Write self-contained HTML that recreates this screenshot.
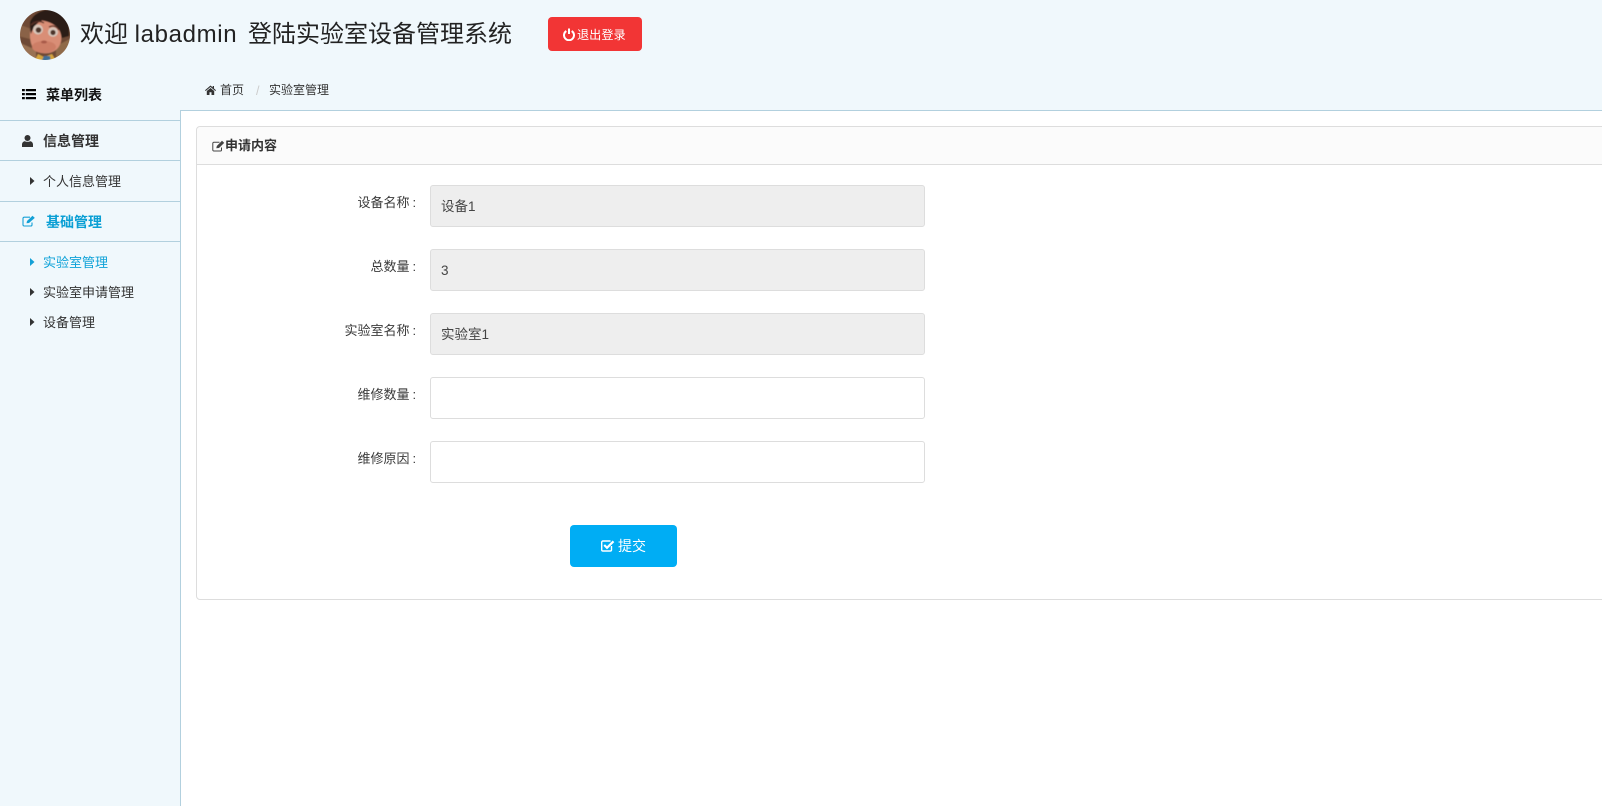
<!DOCTYPE html>
<html lang="zh-CN">
<head>
<meta charset="utf-8">
<title>实验室设备管理系统</title>
<style>
html,body{margin:0;padding:0;width:1602px;height:806px;overflow:hidden;background:#fff;}
body{position:relative;font-family:"Liberation Sans","Noto Sans CJK SC",sans-serif;color:#333;font-size:13px;}
.a{position:absolute;white-space:nowrap;}
.ln{position:absolute;background:#b2d0de;height:1px;}
.lb{position:absolute;width:122.5px;left:296px;text-align:right;font-size:13px;line-height:18px;color:#3a3a3a;white-space:nowrap;}
.lb i{font-style:normal;display:inline-block;width:9px;text-align:left;padding-left:3px;box-sizing:border-box;}
.in{position:absolute;left:430px;width:493px;height:40px;border:1px solid #ddd;border-radius:3px;background:#fff;}
.in.d{background:#eee;}
.in span{position:absolute;left:10px;top:11px;font-size:13.5px;line-height:20px;color:#444;white-space:nowrap;}
svg{position:absolute;display:block;}
</style>
</head>
<body>
<div class="a" style="left:0;top:0;width:1602px;height:110px;background:#f0f8fc;"></div>
<div class="a" style="left:0;top:110px;width:180px;height:696px;background:#f0f8fc;"></div>
<div class="a" style="left:180px;top:110px;width:1px;height:696px;background:#b2d0de;"></div>
<div class="a" style="left:180px;top:110px;width:1422px;height:1px;background:#b2d0de;"></div>

<!-- avatar -->
<svg style="left:20px;top:10px" width="50" height="50" viewBox="0 0 50 50">
<defs>
<clipPath id="c"><circle cx="25" cy="25" r="25"/></clipPath>
<filter id="b" x="-10%" y="-10%" width="120%" height="120%"><feGaussianBlur stdDeviation="0.6"/></filter>
</defs>
<g clip-path="url(#c)"><g filter="url(#b)">
<rect x="-2" y="-2" width="54" height="54" fill="#6e4a34"/>
<path d="M-2 14L14 20L14 30L-2 26Z" fill="#8a6246"/>
<path d="M-2 32L16 40L16 52L-2 52Z" fill="#9a7252"/>
<path d="M36 36L52 28L52 52L36 52Z" fill="#8f6a4a"/>
<path d="M10 12C14 2 26 -2 36 0C46 4 50 14 49 26L42 28C40 20 34 14 26 12C20 11 14 14 10 22Z" fill="#2a1a18"/>
<path d="M13 12C20 8 32 12 38 18C43 25 42 34 37 39C31 45 18 45 13 38C9 31 9 19 13 12Z" fill="#d98e76"/>
<path d="M13 12C16 10 20 9 24 10C19 11 14 15 11 24C10 19 11 15 13 12Z" fill="#2a1a18"/>
<ellipse cx="24" cy="37" rx="12" ry="6" fill="#cd7e66"/>
<ellipse cx="18" cy="19.500" rx="5" ry="5" fill="#d8c6ba"/>
<ellipse cx="33" cy="22" rx="5" ry="4.800" fill="#d8c6ba"/>
<circle cx="18.500" cy="20" r="2.800" fill="#4e3429"/>
<circle cx="33" cy="22.500" r="2.600" fill="#4e3429"/>
<path d="M11 15Q18 9 24 13M29 17Q35 14 39 20" stroke="#5a3226" stroke-width="1.300" fill="none"/>
<ellipse cx="24" cy="32" rx="3" ry="1.500" fill="#a85a48"/>
<path d="M14 52L18 44L24 47L32 44L37 52Z" fill="#d5a53e"/>
<path d="M21 52L24 46L30 46L31 52Z" fill="#3f7097"/>
</g></g>
</svg>

<div class="a" style="left:80px;top:16px;font-size:24px;line-height:38px;color:#222;">欢迎 <span style="letter-spacing:.65px;margin-right:4px">labadmin</span> 登陆实验室设备管理系统</div>

<!-- logout -->
<div class="a" style="left:548px;top:17px;width:94px;height:34px;background:#f23535;border-radius:4px;"></div>
<svg style="left:563px;top:28px" width="12" height="13" viewBox="0 0 12 13"><path d="M3.300 3A5 5 0 1 0 8.700 3" fill="none" stroke="#fff" stroke-width="2"/><path d="M6 .5V6" stroke="#fff" stroke-width="2"/></svg>
<div class="a" style="left:577px;top:26px;font-size:12.2px;line-height:18px;color:#fff;">退出登录</div>

<!-- menu header -->
<svg style="left:22px;top:89px" width="14" height="11" viewBox="0 0 14 11" fill="#000"><path d="M0 0h2.800v2.300H0zM3.800 0H14v2.300H3.800zM0 4h2.800v2.300H0zM3.800 4H14v2.300H3.800zM0 8h2.800v2.300H0zM3.800 8H14v2.300H3.800z"/></svg>
<div class="a" style="left:46px;top:85px;font-size:14px;line-height:20px;font-weight:700;color:#111;">菜单列表</div>
<div class="ln" style="left:0;top:120px;width:180px;"></div>

<!-- 信息管理 -->
<svg style="left:22px;top:135px" width="11" height="12" viewBox="0 0 11 12" fill="#333"><circle cx="5.500" cy="3" r="3"/><path d="M0 12V9.500C0 7.500 1.500 6.200 3 6.200C4 7 7 7 8 6.200C9.500 6.200 11 7.500 11 9.500V12Z"/></svg>
<div class="a" style="left:43px;top:131px;font-size:14px;line-height:20px;font-weight:700;color:#333;">信息管理</div>
<div class="ln" style="left:0;top:160px;width:180px;"></div>

<svg style="left:30px;top:177px" width="5" height="8" viewBox="0 0 5 8" fill="#333"><path d="M0 0L4.500 4L0 8Z"/></svg>
<div class="a" style="left:43px;top:172px;font-size:13px;line-height:20px;color:#333;">个人信息管理</div>
<div class="ln" style="left:0;top:201px;width:180px;"></div>

<!-- 基础管理 -->
<svg style="left:22px;top:215px" width="14" height="12" viewBox="0 0 14 12"><path d="M10 7.500V10A1.200 1.200 0 0 1 8.800 11H2A1.200 1.200 0 0 1 1 10V3.300A1.200 1.200 0 0 1 2 2.200H8" fill="none" stroke="#13a0d6" stroke-width="1.100"/><path d="M4.500 8.300L5 6L10.500 .7L12.800 2.900L7 8Z" fill="#13a0d6"/></svg>
<div class="a" style="left:46px;top:212px;font-size:14px;line-height:20px;font-weight:700;color:#0a9fd4;">基础管理</div>
<div class="ln" style="left:0;top:241px;width:180px;"></div>

<svg style="left:30px;top:258px" width="5" height="8" viewBox="0 0 5 8" fill="#13a0d6"><path d="M0 0L4.500 4L0 8Z"/></svg>
<div class="a" style="left:43px;top:253px;font-size:13px;line-height:20px;color:#0fa2d8;">实验室管理</div>
<svg style="left:30px;top:288px" width="5" height="8" viewBox="0 0 5 8" fill="#333"><path d="M0 0L4.500 4L0 8Z"/></svg>
<div class="a" style="left:43px;top:283px;font-size:13px;line-height:20px;color:#333;">实验室申请管理</div>
<svg style="left:30px;top:318px" width="5" height="8" viewBox="0 0 5 8" fill="#333"><path d="M0 0L4.500 4L0 8Z"/></svg>
<div class="a" style="left:43px;top:313px;font-size:13px;line-height:20px;color:#333;">设备管理</div>

<!-- breadcrumb -->
<svg style="left:205px;top:85px" width="11" height="10" viewBox="0 0 11 10" fill="#333"><path d="M5.500 .5L0 5.200L.7 6L5.500 2L10.300 6L11 5.200L9 3.500V1H7.700V2.400Z"/><path d="M1.800 6L5.500 3L9.200 6V10H6.500V7.200H4.500V10H1.800Z"/></svg>
<div class="a" style="left:220px;top:80px;font-size:12px;line-height:20px;color:#333;">首页</div>
<div class="a" style="left:256px;top:81px;font-size:12.500px;line-height:20px;color:#ccc;">/</div>
<div class="a" style="left:269px;top:80px;font-size:12px;line-height:20px;color:#333;">实验室管理</div>

<!-- panel -->
<div class="a" style="left:196px;top:126px;width:1420px;height:472px;border:1px solid #ddd;border-radius:4px;box-sizing:content-box;"></div>
<div class="a" style="left:197px;top:127px;width:1405px;height:37px;background:#fbfbfb;border-bottom:1px solid #ddd;border-top-left-radius:4px;"></div>
<svg style="left:212px;top:140px" width="13" height="12" viewBox="0 0 13 12"><path d="M9.500 7.500V10A1 1 0 0 1 8.500 11H1.800A1 1 0 0 1 .8 10V3.300A1 1 0 0 1 1.800 2.300H7.500" fill="none" stroke="#444" stroke-width="1"/><path d="M4.300 8.200L4.800 6L10 .8L12.200 2.900L7 8Z" fill="#444"/></svg>
<div class="a" style="left:225px;top:136px;font-size:13px;line-height:20px;font-weight:700;color:#333;">申请内容</div>

<!-- form -->
<div class="lb" style="top:194px;">设备名称<i>:</i></div>
<div class="in d" style="top:185px;height:40px;"><span>设备1</span></div>
<div class="lb" style="top:258px;">总数量<i>:</i></div>
<div class="in d" style="top:249px;"><span>3</span></div>
<div class="lb" style="top:322px;">实验室名称<i>:</i></div>
<div class="in d" style="top:313px;"><span>实验室1</span></div>
<div class="lb" style="top:386px;">维修数量<i>:</i></div>
<div class="in" style="top:377px;"></div>
<div class="lb" style="top:450px;">维修原因<i>:</i></div>
<div class="in" style="top:441px;"></div>

<!-- submit -->
<div class="a" style="left:570px;top:525px;width:107px;height:42px;background:#00adf4;border-radius:4px;"></div>
<svg style="left:601px;top:539px" width="14" height="14" viewBox="0 0 14 14"><path d="M10.500 7V10.700A1.300 1.300 0 0 1 9.200 12H2A1.300 1.300 0 0 1 .7 10.700V3.300A1.300 1.300 0 0 1 2 2H9.500" fill="none" stroke="#fff" stroke-width="1.400"/><path d="M3.200 6L6 8.800L12.500 2.300" fill="none" stroke="#fff" stroke-width="2.200"/></svg>
<div class="a" style="left:618px;top:536px;font-size:14px;line-height:20px;color:#fff;">提交</div>
</body>
</html>
